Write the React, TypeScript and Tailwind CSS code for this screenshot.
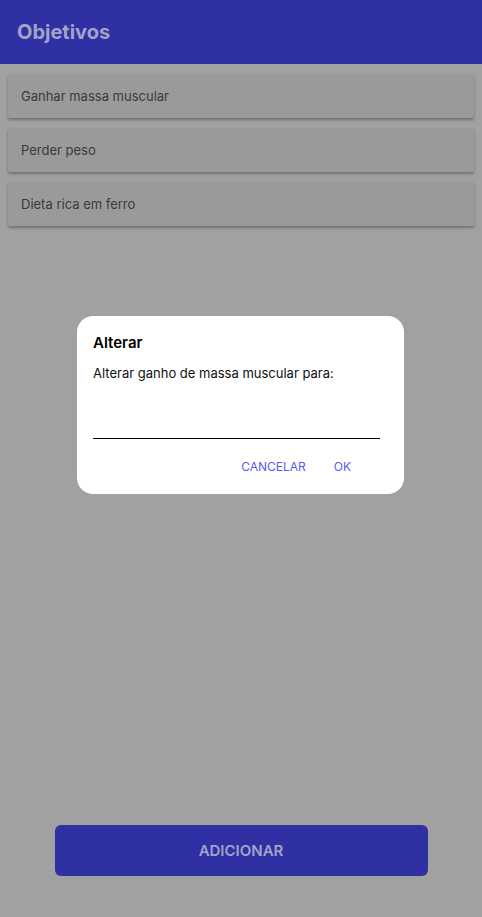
import React from 'react';

const goals = ['Ganhar massa muscular', 'Perder peso', 'Dieta rica em ferro'];

export default function App() {
  return (
    <div className="relative flex h-[917px] w-[482px] flex-col bg-[#a1a1a1] font-['Inter',sans-serif]">
      <header className="flex h-16 items-center bg-[#2e30a3] px-[17px]">
        <h1 className="text-[20px] font-bold text-[#a3a3c8]">Objetivos</h1>
      </header>

      <ul className="flex flex-col gap-[10px] px-2 pt-[10px]">
        {goals.map((g) => (
          <li
            key={g}
            className="flex h-[44px] items-center rounded-[2px] bg-[#9a9a9a] px-[13px] pt-[2px] text-[13px] text-[#3a3a3a] shadow-[0_2px_3px_rgba(0,0,0,0.3)]"
          >
            {g}
          </li>
        ))}
      </ul>

      <div className="mt-auto flex justify-center pb-[41px]">
        <button className="flex h-[51px] w-[373px] items-center justify-center rounded-[6px] bg-[#2e30a3] pt-[2px] text-[15px] font-semibold text-[#a3a3c8]">
          ADICIONAR
        </button>
      </div>

      {/* dialog sobre a lista */}
      <div className="absolute inset-0 flex items-start justify-center pt-[316px] pr-px">
        <div className="flex h-[178px] w-[327px] flex-col rounded-[16px] bg-white px-4 pt-[17px]">
          <h2 className="text-[15px] font-semibold leading-5 text-black">Alterar</h2>
          <p className="mt-[10px] text-[13px] leading-5 text-[#111]">
            Alterar ganho de massa muscular para:
          </p>
          <div className="mt-[55px] h-px w-[287px] bg-black" />
          <div className="mt-[20px] flex justify-end gap-[28px] pr-[37px] text-[12px] leading-4 text-[#5a5af0]">
            <span>CANCELAR</span>
            <span>OK</span>
          </div>
        </div>
      </div>
    </div>
  );
}
